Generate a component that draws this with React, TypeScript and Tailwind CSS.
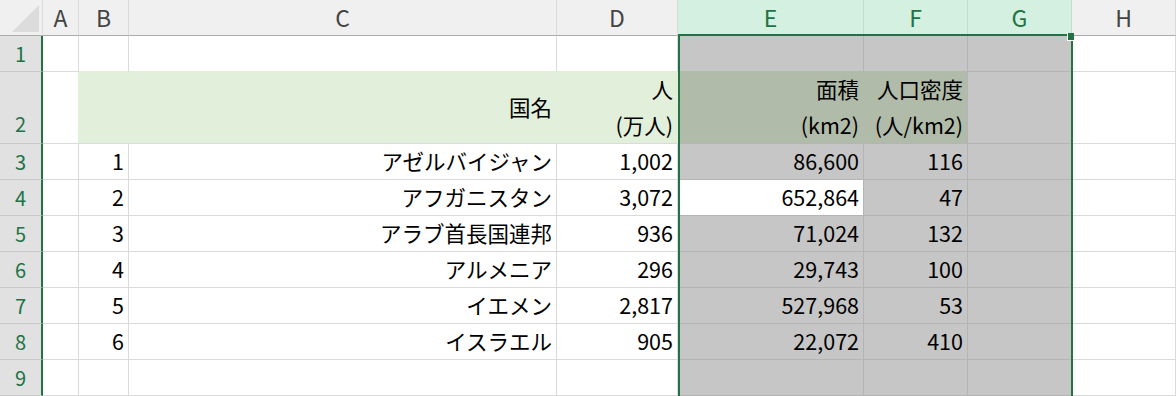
import React from 'react';

const COLS = ['A', 'B', 'C', 'D', 'E', 'F', 'G', 'H'];
const SELECTED = [4, 5, 6];

const ROWS: string[][] = [
  ['1', 'アゼルバイジャン', '1,002', '86,600', '116'],
  ['2', 'アフガニスタン', '3,072', '652,864', '47'],
  ['3', 'アラブ首長国連邦', '936', '71,024', '132'],
  ['4', 'アルメニア', '296', '29,743', '100'],
  ['5', 'イエメン', '2,817', '527,968', '53'],
  ['6', 'イスラエル', '905', '22,072', '410'],
];

const GREEN = '#e2efda';
const GREEN_SEL = '#b1bba9';
const GRAY_SEL = '#c6c6c6';
const GRID = '#dadada';
const GRID_SEL = '#b4b4b4';

function cellContent(r: number, c: number): React.ReactNode {
  if (r === 2) {
    if (c === 2) return '国名';
    if (c === 3) return (<><span>人</span><span>(万人)</span></>);
    if (c === 4) return (<><span>面積</span><span>(km2)</span></>);
    if (c === 5) return (<><span>人口密度</span><span>(人/km2)</span></>);
    return null;
  }
  if (r >= 3 && r <= 8 && c >= 1 && c <= 5) return ROWS[r - 3][c - 1];
  return null;
}

function Cell({ r, c }: { r: number; c: number }) {
  const sel = SELECTED.includes(c);
  const active = r === 4 && c === 4;
  const green = r === 2 && c >= 1 && c <= 5;
  const bg = green ? (sel ? GREEN_SEL : GREEN) : sel && !active ? GRAY_SEL : '#ffffff';

  let right = sel ? GRID_SEL : GRID;
  if (r === 2 && c >= 0 && c <= 4) right = c === 0 ? GREEN : bg;
  let bottom = sel ? GRID_SEL : GRID;
  if (r === 1 && c >= 1 && c <= 5) bottom = c >= 4 ? GREEN_SEL : GREEN;

  const twoLine = r === 2 && c >= 3;
  return (
    <div
      className={`flex pr-[4px] border-r border-b text-[21.5px] text-black ${twoLine ? 'flex-col items-end justify-end leading-[36px]' : 'items-center justify-end'}`}
      style={{ backgroundColor: bg, borderRightColor: right, borderBottomColor: bottom }}
    >
      {cellContent(r, c)}
    </div>
  );
}

export default function App() {
  const rowNums = [1, 2, 3, 4, 5, 6, 7, 8, 9];
  return (
    <div className="relative w-[1176px] h-[396px] overflow-hidden bg-white font-['Noto_Sans_CJK_JP',sans-serif]">
      <div className="grid grid-cols-[43px_36px_50px_428px_121px_186px_104px_104px_104px] grid-rows-[36px_36px_72px_repeat(7,36px)]">
        {/* corner */}
        <div className="relative bg-[#f0f0f0] border-r border-b border-r-[#dadada] border-b-[#ababab]">
          <svg className="absolute left-[12px] top-[5px]" width="27" height="27" viewBox="0 0 27 27">
            <polygon points="27,0 27,27 0,27" fill="#dcdcdc" />
          </svg>
        </div>
        {COLS.map((l, i) =>
          SELECTED.includes(i) ? (
            <div key={l} className="flex items-center justify-center bg-[#d3f0e0] text-[#217346] text-[23px] border-r border-r-[#bfe0cd] border-b-2 border-b-[#217346]">
              {l}
            </div>
          ) : (
            <div key={l} className="flex items-center justify-center bg-[#f0f0f0] text-[#444444] text-[23px] border-r border-r-[#dadada] border-b border-b-[#ababab]">
              {l}
            </div>
          )
        )}

        {rowNums.map((r) => (
          <React.Fragment key={r}>
            <div className={`flex justify-center bg-[#e1e1e1] text-[#217346] text-[20px] border-b border-b-[#c8c8c8] border-r-2 border-r-[#217346] ${r === 2 ? 'items-end pb-[4px]' : 'items-center'}`}>
              {r}
            </div>
            {COLS.map((_, c) => (
              <Cell key={c} r={r} c={c} />
            ))}
          </React.Fragment>
        ))}
      </div>

      {/* selection outline + fill handle */}
      <div className="pointer-events-none absolute left-[678px] top-[34px] w-[395px] h-[380px] border-2 border-[#217346]" />
      <div className="pointer-events-none absolute left-[1067px] top-[33px] w-[7px] h-[8px] bg-[#217346] border-l border-b border-white" />
    </div>
  );
}
